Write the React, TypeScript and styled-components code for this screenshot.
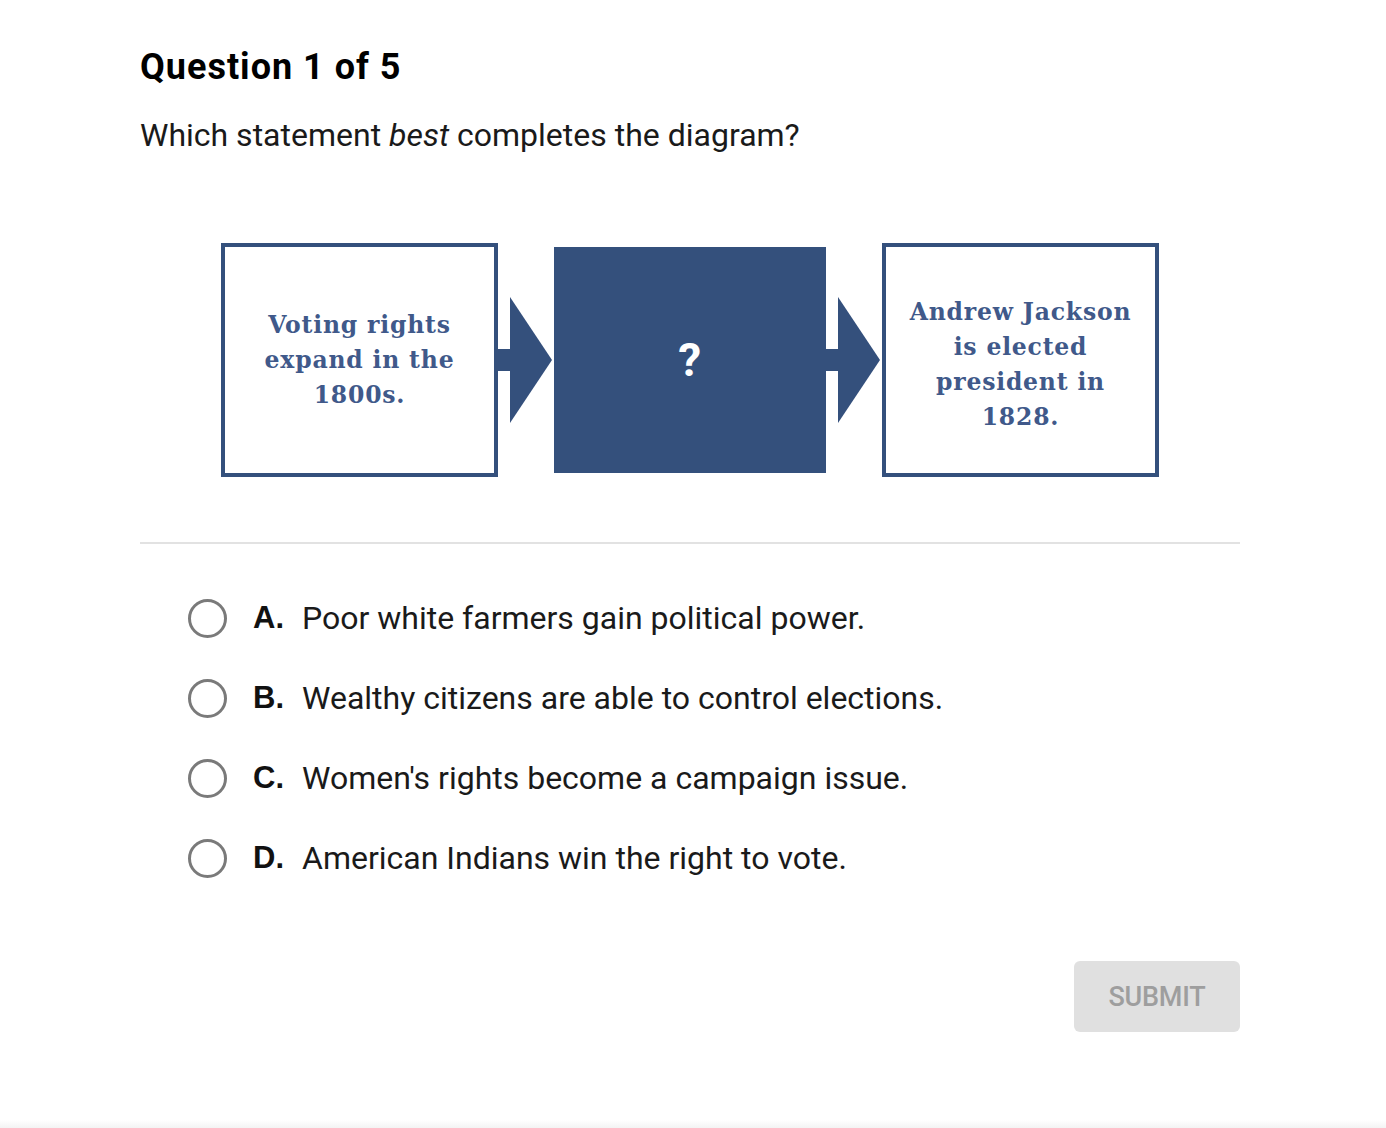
import React from 'react';
import styled, { createGlobalStyle } from 'styled-components';

const GlobalStyle = createGlobalStyle`
  html, body {
    margin: 0;
    padding: 0;
    background: #ffffff;
  }
  body {
    font-family: Roboto, "Liberation Sans", Arial, sans-serif;
    color: #111111;
  }
`;

const Page = styled.div`
  position: relative;
  width: 1386px;
  height: 1128px;
  overflow: hidden;
  background: #ffffff;
`;

const Main = styled.main`
  width: 1100px;
  padding: 44px 0 0 140px;
`;

const Heading = styled.h1`
  margin: 0;
  font-size: 36px;
  line-height: 46px;
  font-weight: 700;
  letter-spacing: 1px;
  color: #000000;
`;

const Prompt = styled.p`
  margin: 24px 0 0;
  font-size: 32px;
  line-height: 42px;
  font-weight: 400;
  color: #1a1a1a;

  em {
    font-style: italic;
  }
`;

const Diagram = styled.div`
  display: flex;
  align-items: center;
  justify-content: center;
  margin-top: 87px;
  height: 234px;
`;

const StepBox = styled.div<{ $filled?: boolean; $nudge?: number }>`
  box-sizing: border-box;
  width: 277px;
  height: 234px;
  display: flex;
  align-items: center;
  justify-content: center;
  text-align: center;
  padding-top: ${(p) => p.$nudge ?? 0}px;
  border: 4px solid #34507c;
  background: ${(p) => (p.$filled ? '#34507c' : '#ffffff')};
  font-family: "DejaVu Serif", "Liberation Serif", serif;
  font-size: 23.5px;
  font-weight: 700;
  letter-spacing: 0.8px;
  line-height: 35px;
  color: #40598a;
`;

const MiddleBox = styled(StepBox)`
  width: 272px;
  height: 226px;
  border: none;
`;

const Mark = styled.span`
  font-family: Roboto, "Liberation Sans", sans-serif;
  font-weight: 700;
  font-size: 46px;
  color: #ffffff;
`;

const ArrowSvg = styled.svg`
  display: block;
  flex: none;
`;

const Arrow = () => (
  <ArrowSvg width="56" height="126" viewBox="0 0 56 126">
    <rect x="0" y="52" width="14" height="22" fill="#34507c" />
    <polygon points="12,0 54,63 12,126" fill="#34507c" />
  </ArrowSvg>
);

const Divider = styled.hr`
  margin: 65px 0 0;
  border: none;
  height: 2px;
  background: #e2e2e2;
`;

const Options = styled.div`
  display: flex;
  flex-direction: column;
  gap: 40px;
  margin-top: 54px;
  padding-left: 48px;
`;

const Option = styled.label`
  display: flex;
  align-items: center;
  height: 40px;
  font-size: 32px;
  color: #1a1a1a;
  cursor: pointer;
`;

const Radio = styled.span`
  box-sizing: border-box;
  width: 39px;
  height: 39px;
  border-radius: 50%;
  border: 3px solid #7a7a7a;
  flex: none;
  margin-right: 26px;
`;

const Letter = styled.span`
  font-family: "Liberation Sans", Arial, sans-serif;
  font-weight: 700;
  font-size: 31px;
  width: 49px;
  color: #111111;
`;

const Footer = styled.div`
  display: flex;
  justify-content: flex-end;
  margin-top: 83px;
`;

const SubmitButton = styled.button`
  width: 166px;
  height: 71px;
  border: none;
  border-radius: 6px;
  background: #e0e0e0;
  color: #9e9e9e;
  font-family: Roboto, "Liberation Sans", sans-serif;
  font-size: 27px;
  font-weight: 500;
  letter-spacing: -0.2px;
`;

const BottomEdge = styled.div`
  position: absolute;
  left: 0;
  right: 0;
  bottom: 0;
  height: 8px;
  background: linear-gradient(#ffffff, #f3f3f3);
`;

const answers = [
  { key: 'A.', text: 'Poor white farmers gain political power.' },
  { key: 'B.', text: 'Wealthy citizens are able to control elections.' },
  { key: 'C.', text: "Women's rights become a campaign issue." },
  { key: 'D.', text: 'American Indians win the right to vote.' },
];

const App = () => {
  return (
    <>
      <GlobalStyle />
      <Page>
        <Main>
          <Heading>Question 1 of 5</Heading>
          <Prompt>
            Which statement <em>best</em> completes the diagram?
          </Prompt>
          <Diagram>
            <StepBox>
              Voting rights
              <br />
              expand in the
              <br />
              1800s.
            </StepBox>
            <Arrow />
            <MiddleBox $filled>
              <Mark>?</Mark>
            </MiddleBox>
            <Arrow />
            <StepBox $nudge={10}>
              Andrew Jackson
              <br />
              is elected
              <br />
              president in
              <br />
              1828.
            </StepBox>
          </Diagram>
          <Divider />
          <Options>
            {answers.map((a) => (
              <Option key={a.key}>
                <Radio />
                <Letter>{a.key}</Letter>
                {a.text}
              </Option>
            ))}
          </Options>
          <Footer>
            <SubmitButton>SUBMIT</SubmitButton>
          </Footer>
        </Main>
        <BottomEdge />
      </Page>
    </>
  );
};

export default App;
